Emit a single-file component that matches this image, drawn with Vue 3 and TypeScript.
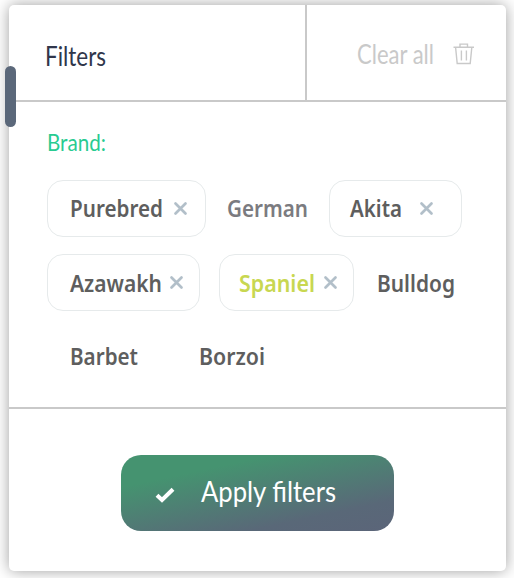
<script setup lang="ts">
interface Brand {
  name: string
  width: number
  tone?: string
  selected?: boolean
}

const rows: Brand[][] = [
  [
    { name: 'Purebred', width: 93, selected: true },
    { name: 'German', width: 81, tone: 'muted' },
    { name: 'Akita', width: 52, selected: true },
  ],
  [
    { name: 'Azawakh', width: 92, selected: true },
    { name: 'Spaniel', width: 76, tone: 'lime', selected: true },
    { name: 'Bulldog', width: 78 },
  ],
  [
    { name: 'Barbet', width: 68 },
    { name: 'Borzoi', width: 66 },
  ],
]
</script>

<template>
  <main class="page">
    <section class="card">
      <span class="handle"></span>
      <header class="header">
        <div class="title">
          <svg class="label" width="61" height="30"><text y="23" textLength="61" lengthAdjust="spacingAndGlyphs">Filters</text></svg>
        </div>
        <div class="clear">
          <svg class="label" width="78" height="30"><text y="23" textLength="77" lengthAdjust="spacingAndGlyphs">Clear all</text></svg>
          <svg class="trash" width="22" height="22" viewBox="0 0 22 22">
            <path d="M.5 4.3H21M7 4V1.1h7.5V4M2.6 4.5l1.6 16h13l1.6-16M8.4 7.5v10M13.4 7.5v10" />
          </svg>
        </div>
      </header>

      <div class="brands">
        <svg class="label brand-title" width="59" height="30"><text y="23" textLength="59" lengthAdjust="spacingAndGlyphs">Brand:</text></svg>
        <div v-for="(row, i) in rows" :key="i" class="row">
          <div v-for="brand in row" :key="brand.name" class="chip" :class="[brand.name.toLowerCase(), brand.tone, { selected: brand.selected }]">
            <svg class="label" :width="brand.width" height="30">
              <text :y="i === 1 ? 23.5 : 22.5" :textLength="brand.width" lengthAdjust="spacingAndGlyphs">{{ brand.name }}</text>
            </svg>
            <svg v-if="brand.selected" class="cross" width="13" height="13" viewBox="0 0 13 13">
              <path d="M1.5 1.5l10 10M11.5 1.5l-10 10" />
            </svg>
          </div>
        </div>
      </div>

      <footer class="footer">
        <button class="apply" type="button">
          <svg class="check" width="20" height="16" viewBox="0 0 20 16">
            <path d="M2 8.2l5 4.8L18 2.2" />
          </svg>
          <svg class="label" width="135" height="36"><text y="27" textLength="135" lengthAdjust="spacingAndGlyphs">Apply filters</text></svg>
        </button>
      </footer>
    </section>
  </main>
</template>

<style>
body {
  margin: 0;
  background: #fff;
}
</style>

<style scoped>
.page {
  box-sizing: border-box;
  height: 578px;
  padding: 5px 8px 7px 9px;
  overflow: hidden;
}
.card {
  position: relative;
  display: flex;
  flex-direction: column;
  box-sizing: border-box;
  height: 566px;
  background: #fff;
  border-radius: 5px;
  box-shadow: 0 0 15px rgba(0, 0, 0, 0.38);
}
.handle {
  position: absolute;
  left: -4px;
  top: 61px;
  width: 11px;
  height: 61px;
  border-radius: 5.5px;
  background: #5b687a;
}
svg {
  display: block;
  flex: none;
  overflow: visible;
}
.label {
  font-family: Lato, sans-serif;
  font-size: 26px;
  fill: currentColor;
}
.header {
  display: flex;
  height: 95px;
  border-bottom: 2px solid #c9c9c9;
}
.title {
  box-sizing: border-box;
  width: 298px;
  padding: 38px 0 0 35.5px;
  border-right: 2px solid #c9c9c9;
  color: #30364b;
}
.clear {
  display: flex;
  gap: 18px;
  padding: 36px 0 0 50px;
  color: #c9c9c9;
}
.trash {
  margin-top: 2px;
  fill: none;
  stroke: currentColor;
  stroke-width: 1.4;
}
.brands {
  display: flex;
  flex-direction: column;
  height: 305px;
  border-bottom: 2px solid #c9c9c9;
  padding-left: 38px;
}
.brand-title {
  margin: 26px 0 22px;
  font-size: 23.5px;
  color: #28cb91;
}
.row {
  display: flex;
  height: 57px;
  margin-bottom: 17px;
}
.chip {
  box-sizing: border-box;
  display: flex;
  align-items: center;
  height: 57px;
  border: 1px solid transparent;
  border-radius: 16px;
  color: #5e5e5e;
}
.chip .label {
  font-family: "Noto Sans", sans-serif;
  font-size: 22.5px;
  font-weight: 600;
}
.selected {
  border-color: #e6eaeb;
}
.muted {
  color: #7b7b80;
}
.lime {
  color: #c8d751;
}
.cross {
  fill: none;
  stroke: #b2bfc9;
  stroke-width: 2.7;
  stroke-linecap: round;
}
.purebred {
  width: 159px;
  padding-left: 22px;
  gap: 11px;
}
.german {
  margin-left: 20px;
}
.akita {
  width: 133px;
  margin-left: 20px;
  padding-left: 20px;
  gap: 18px;
}
.azawakh {
  width: 153px;
  padding-left: 22px;
  gap: 8px;
}
.spaniel {
  width: 135px;
  margin-left: 19px;
  padding-left: 19px;
  gap: 9px;
}
.bulldog {
  margin-left: 21.5px;
}
.barbet {
  margin-left: 21.5px;
}
.borzoi {
  margin-left: 59.5px;
}
.footer {
  display: flex;
  padding: 46px 0 0 112px;
}
.apply {
  display: flex;
  align-items: center;
  box-sizing: border-box;
  width: 273px;
  height: 76px;
  padding: 0 0 0 34px;
  gap: 26px;
  border: 0;
  border-radius: 20px;
  background: linear-gradient(168deg, #459370 24%, #596878 77%, #5b6579 100%);
  color: #fff;
}
.apply .label {
  font-size: 29px;
}
.check {
  margin-top: 4px;
  fill: none;
  stroke: currentColor;
  stroke-width: 4;
}
</style>
